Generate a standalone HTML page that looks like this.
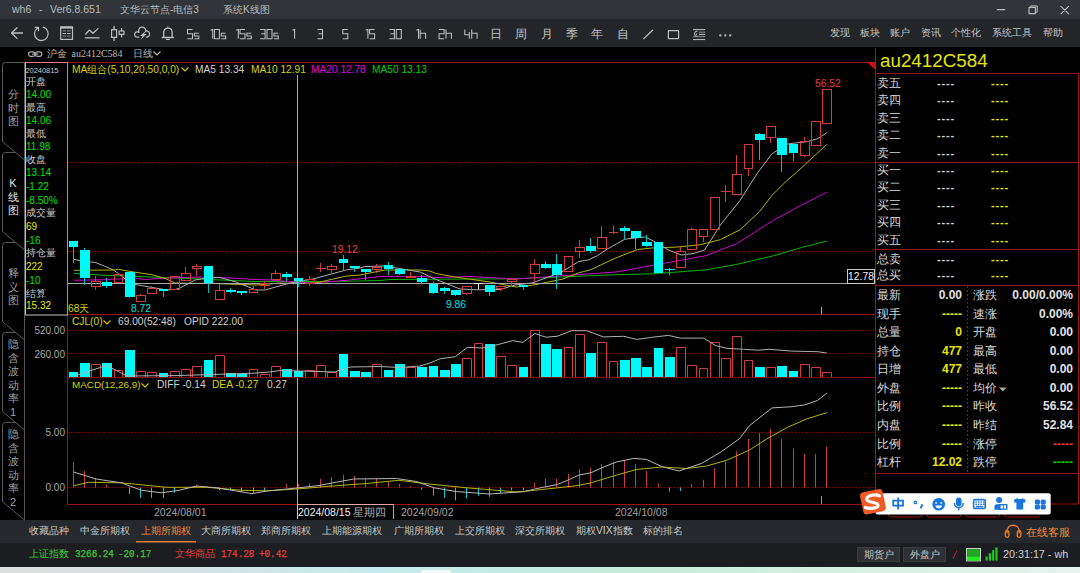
<!DOCTYPE html>
<html><head><meta charset="utf-8">
<style>
html,body{margin:0;padding:0}
body{width:1080px;height:573px;overflow:hidden;position:relative;background:#000;font-family:"Liberation Sans",sans-serif;}
.a{position:absolute;white-space:nowrap;line-height:1}
#title{position:absolute;left:0;top:0;width:1080px;height:19px;background:#313439}
#tool{position:absolute;left:0;top:19px;width:1080px;height:28px;background:#232529}
#tabbar{position:absolute;left:0;top:520px;width:1080px;height:23px;background:#25282c}
#status{position:absolute;left:0;top:543px;width:1080px;height:24px;background:#1c1d20}
#strip{position:absolute;left:0;top:567px;width:1080px;height:6px;background:linear-gradient(90deg,#dcdfdd 0%,#d4e4e6 20%,#c4ecec 35%,#c6ecda 60%,#d6f0e2 80%,#e6f2ee 100%)}
svg{position:absolute;left:0;top:0}
.tt{color:#b8bcc0;font-size:10.5px}
.tb{color:#c4c4c4;font-size:10.2px}
.dig{color:#c8c8c8;font-size:13px;font-family:"Liberation Sans",sans-serif;letter-spacing:-0.5px}
.lt{color:#a0a0a0;font-size:11px;text-align:center;width:22px;line-height:13.5px;white-space:normal}
.dw{font-size:10px;color:#c8c8c8}
.g{color:#00e000}.y{color:#e6e600}.w{color:#d8d8d8}
.rp{font-size:12px;color:#d8d8d8}
.rv{font-size:12px;font-weight:bold;text-align:right}
.bt{font-size:10.3px;color:#c8c8c8}
</style></head><body>
<div id="title"></div>
<div id="tool"></div>
<div id="tabbar"></div>
<div id="status"></div>
<div id="strip"></div>

<svg width="1080" height="573" viewBox="0 0 1080 573">
<line x1="67" y1="162.5" x2="875" y2="162.5" stroke="#800000" stroke-width="1" stroke-dasharray="2,1.37" />
<line x1="67" y1="251.5" x2="875" y2="251.5" stroke="#800000" stroke-width="1" stroke-dasharray="2,1.37" />
<line x1="67" y1="330.5" x2="875" y2="330.5" stroke="#800000" stroke-width="1" stroke-dasharray="2,1.37" />
<line x1="67" y1="353.5" x2="875" y2="353.5" stroke="#800000" stroke-width="1" stroke-dasharray="2,1.37" />
<line x1="67" y1="432.5" x2="875" y2="432.5" stroke="#800000" stroke-width="1" stroke-dasharray="2,1.37" />
<line x1="67" y1="487.5" x2="875" y2="487.5" stroke="#800000" stroke-width="1" stroke-dasharray="2,1.37" />
<line x1="67" y1="62.5" x2="875" y2="62.5" stroke="#a01010" stroke-width="1" />
<line x1="67.5" y1="62" x2="67.5" y2="504" stroke="#a01010" stroke-width="1" />
<line x1="875.5" y1="48" x2="875.5" y2="504" stroke="#a01010" stroke-width="1" />
<line x1="67" y1="314.5" x2="875" y2="314.5" stroke="#a01010" stroke-width="1" />
<line x1="67" y1="504.5" x2="875" y2="504.5" stroke="#a01010" stroke-width="1" />
<polygon points="867,62 875.5,62 875.5,70" fill="#d01010"/>
<polyline points="73.6,273.3 102.6,275.2 166.0,277.6 256.0,281.5 336.0,281.5 380.0,280.5 390.0,279.5 516.0,278.8 616.0,274.7 653.0,273.8 706.0,269.9 736.7,264.4 773.3,255.8 802.7,247.2 826.7,241.1" fill="none" stroke="#00b400" stroke-width="1" stroke-linejoin="round"/>
<polyline points="73.6,280.3 101.4,279.8 134.4,278.2 145.4,279.5 166.0,278.2 200.0,277.0 230.0,278.0 256.0,279.5 270.0,280.0 295.0,282.0 310.0,283.0 345.0,280.5 380.0,276.5 420.0,276.3 436.0,277.5 470.0,276.5 516.0,279.0 616.0,272.0 706.0,255.7 736.7,243.6 773.3,220.3 802.7,204.4 826.7,192.2" fill="none" stroke="#d000d0" stroke-width="1" stroke-linejoin="round"/>
<polyline points="73.6,270.3 113.6,270.0 118.5,269.3 127.0,270.9 134.4,272.1 151.5,274.6 166.0,278.8 175.0,283.0 190.0,283.3 215.0,283.5 240.0,284.5 256.0,285.0 280.0,283.0 300.0,283.5 315.6,283.0 346.0,276.1 360.0,275.0 385.0,270.0 420.0,270.0 430.0,271.0 436.0,273.5 455.0,277.0 490.0,282.0 500.0,284.0 516.0,287.0 531.7,285.4 547.4,282.2 563.0,279.0 578.8,272.8 591.0,269.7 604.0,263.4 616.0,257.9 637.4,249.5 653.1,247.9 676.6,247.1 700.0,244.8 720.4,239.6 740.0,229.8 759.6,211.5 771.8,195.6 786.5,180.9 796.9,172.0 826.8,144.4" fill="none" stroke="#b4b400" stroke-width="1" stroke-linejoin="round"/>
<polyline points="73.6,259.3 84.3,261.4 95.3,262.4 102.6,265.4 113.6,270.0 122.2,276.4 129.5,282.5 134.4,284.3 151.5,287.4 166.0,289.8 175.0,289.5 180.0,288.0 195.0,280.0 210.0,277.5 220.0,277.5 236.0,282.0 256.0,290.0 265.0,290.0 290.0,283.0 300.0,281.5 315.0,278.5 346.0,270.0 360.0,268.0 365.0,266.5 385.0,266.0 400.0,268.6 420.0,272.0 436.0,279.5 445.0,283.0 460.0,289.0 478.0,289.8 500.0,289.5 515.0,285.0 531.7,283.0 547.4,277.5 563.0,271.2 578.8,261.5 588.2,260.0 597.6,255.5 607.0,249.2 624.8,239.2 645.2,236.9 653.1,240.8 668.8,250.2 681.4,255.0 694.0,253.4 704.6,250.0 720.4,225.0 740.0,200.5 757.0,173.6 771.8,154.0 786.5,144.2 796.9,142.8 807.4,141.7 817.8,138.6 826.8,132.7" fill="none" stroke="#b0b0b0" stroke-width="1" stroke-linejoin="round"/>
<line x1="67" y1="283.5" x2="847" y2="283.5" stroke="#a8a8a8" stroke-width="1" />
<line x1="297.5" y1="75" x2="297.5" y2="504" stroke="#b0b0b0" stroke-width="1" />
<line x1="821.5" y1="307" x2="821.5" y2="314" stroke="#a0a0a0" stroke-width="1" />
<line x1="821.5" y1="496" x2="821.5" y2="504" stroke="#a0a0a0" stroke-width="1" />
<line x1="73.5" y1="247" x2="73.5" y2="263" stroke="#00c0c0" stroke-width="1" />
<rect x="69" y="241" width="9" height="6" fill="#00f8f8"/>
<line x1="84.5" y1="248" x2="84.5" y2="250" stroke="#00c0c0" stroke-width="1" />
<line x1="84.5" y1="278" x2="84.5" y2="285" stroke="#00c0c0" stroke-width="1" />
<rect x="80" y="250" width="10" height="28" fill="#00f8f8"/>
<line x1="95.5" y1="276" x2="95.5" y2="281" stroke="#d23c3c" stroke-width="1" />
<line x1="95.5" y1="287" x2="95.5" y2="290" stroke="#d23c3c" stroke-width="1" />
<rect x="91.5" y="281.5" width="9" height="5" fill="none" stroke="#d23c3c" stroke-width="1"/>
<line x1="106.5" y1="278" x2="106.5" y2="282" stroke="#00c0c0" stroke-width="1" />
<line x1="106.5" y1="286" x2="106.5" y2="288" stroke="#00c0c0" stroke-width="1" />
<rect x="102" y="282" width="10" height="4" fill="#00f8f8"/>
<line x1="118.5" y1="273" x2="118.5" y2="274" stroke="#d23c3c" stroke-width="1" />
<rect x="114.5" y="274.5" width="8" height="8" fill="none" stroke="#d23c3c" stroke-width="1"/>
<line x1="129.5" y1="297" x2="129.5" y2="298" stroke="#00c0c0" stroke-width="1" />
<rect x="125" y="272" width="10" height="25" fill="#00f8f8"/>
<line x1="140.5" y1="294" x2="140.5" y2="295" stroke="#d23c3c" stroke-width="1" />
<rect x="136.5" y="295.5" width="9" height="6" fill="none" stroke="#d23c3c" stroke-width="1"/>
<line x1="151.5" y1="286" x2="151.5" y2="288" stroke="#d23c3c" stroke-width="1" />
<rect x="147.5" y="288.5" width="9" height="5" fill="none" stroke="#d23c3c" stroke-width="1"/>
<line x1="163.5" y1="291" x2="163.5" y2="297" stroke="#00c0c0" stroke-width="1" />
<rect x="159" y="289" width="9" height="2" fill="#00f8f8"/>
<rect x="170.5" y="276.5" width="9" height="13" fill="none" stroke="#d23c3c" stroke-width="1"/>
<line x1="185.5" y1="267" x2="185.5" y2="273" stroke="#d23c3c" stroke-width="1" />
<rect x="181.5" y="273.5" width="9" height="7" fill="none" stroke="#d23c3c" stroke-width="1"/>
<line x1="196.5" y1="264" x2="196.5" y2="266" stroke="#d23c3c" stroke-width="1" />
<line x1="196.5" y1="269" x2="196.5" y2="276" stroke="#d23c3c" stroke-width="1" />
<rect x="192.5" y="266.5" width="9" height="2" fill="none" stroke="#d23c3c" stroke-width="1"/>
<line x1="208.5" y1="283" x2="208.5" y2="293" stroke="#00c0c0" stroke-width="1" />
<rect x="204" y="266" width="9" height="17" fill="#00f8f8"/>
<line x1="219.5" y1="284" x2="219.5" y2="290" stroke="#d23c3c" stroke-width="1" />
<rect x="215.5" y="290.5" width="9" height="9" fill="none" stroke="#d23c3c" stroke-width="1"/>
<line x1="230.5" y1="288" x2="230.5" y2="290" stroke="#00c0c0" stroke-width="1" />
<line x1="230.5" y1="292" x2="230.5" y2="293" stroke="#00c0c0" stroke-width="1" />
<rect x="226" y="290" width="10" height="2" fill="#00f8f8"/>
<line x1="241.5" y1="293" x2="241.5" y2="295" stroke="#00c0c0" stroke-width="1" />
<rect x="237" y="291" width="10" height="2" fill="#00f8f8"/>
<line x1="253.5" y1="286" x2="253.5" y2="289" stroke="#d23c3c" stroke-width="1" />
<rect x="249.5" y="289.5" width="8" height="3" fill="none" stroke="#d23c3c" stroke-width="1"/>
<line x1="264.5" y1="281" x2="264.5" y2="283" stroke="#d23c3c" stroke-width="1" />
<line x1="264.5" y1="286" x2="264.5" y2="289" stroke="#d23c3c" stroke-width="1" />
<rect x="260.5" y="283.5" width="9" height="2" fill="none" stroke="#d23c3c" stroke-width="1"/>
<line x1="275.5" y1="270" x2="275.5" y2="273" stroke="#d23c3c" stroke-width="1" />
<rect x="271.5" y="273.5" width="9" height="6" fill="none" stroke="#d23c3c" stroke-width="1"/>
<line x1="286.5" y1="272" x2="286.5" y2="274" stroke="#00c0c0" stroke-width="1" />
<line x1="286.5" y1="277" x2="286.5" y2="281" stroke="#00c0c0" stroke-width="1" />
<rect x="282" y="274" width="10" height="3" fill="#00f8f8"/>
<line x1="298.5" y1="281" x2="298.5" y2="287" stroke="#00c0c0" stroke-width="1" />
<rect x="294" y="278" width="9" height="3" fill="#00f8f8"/>
<line x1="309.5" y1="276" x2="309.5" y2="279" stroke="#d23c3c" stroke-width="1" />
<line x1="309.5" y1="284" x2="309.5" y2="286" stroke="#d23c3c" stroke-width="1" />
<rect x="305.5" y="279.5" width="9" height="4" fill="none" stroke="#d23c3c" stroke-width="1"/>
<line x1="320.5" y1="263" x2="320.5" y2="272" stroke="#d23c3c" stroke-width="1" />
<line x1="316" y1="268.5" x2="326" y2="268.5" stroke="#d23c3c" stroke-width="1" />
<line x1="331.5" y1="264" x2="331.5" y2="266" stroke="#d23c3c" stroke-width="1" />
<line x1="331.5" y1="270" x2="331.5" y2="273" stroke="#d23c3c" stroke-width="1" />
<rect x="327.5" y="266.5" width="9" height="3" fill="none" stroke="#d23c3c" stroke-width="1"/>
<line x1="343.5" y1="255" x2="343.5" y2="259" stroke="#00c0c0" stroke-width="1" />
<line x1="343.5" y1="263" x2="343.5" y2="271" stroke="#00c0c0" stroke-width="1" />
<rect x="339" y="259" width="9" height="4" fill="#00f8f8"/>
<line x1="354.5" y1="268" x2="354.5" y2="272" stroke="#00c0c0" stroke-width="1" />
<rect x="350" y="266" width="10" height="2" fill="#00f8f8"/>
<line x1="365.5" y1="272" x2="365.5" y2="280" stroke="#00c0c0" stroke-width="1" />
<rect x="361" y="269" width="10" height="3" fill="#00f8f8"/>
<line x1="376.5" y1="264" x2="376.5" y2="267" stroke="#d23c3c" stroke-width="1" />
<line x1="376.5" y1="270" x2="376.5" y2="273" stroke="#d23c3c" stroke-width="1" />
<rect x="372.5" y="267.5" width="9" height="2" fill="none" stroke="#d23c3c" stroke-width="1"/>
<line x1="388.5" y1="262" x2="388.5" y2="265" stroke="#00c0c0" stroke-width="1" />
<line x1="388.5" y1="269" x2="388.5" y2="275" stroke="#00c0c0" stroke-width="1" />
<rect x="384" y="265" width="9" height="4" fill="#00f8f8"/>
<line x1="399.5" y1="268" x2="399.5" y2="269" stroke="#00c0c0" stroke-width="1" />
<line x1="399.5" y1="274" x2="399.5" y2="275" stroke="#00c0c0" stroke-width="1" />
<rect x="395" y="269" width="10" height="5" fill="#00f8f8"/>
<line x1="410.5" y1="272" x2="410.5" y2="276" stroke="#d23c3c" stroke-width="1" />
<line x1="410.5" y1="277" x2="410.5" y2="278" stroke="#d23c3c" stroke-width="1" />
<rect x="406.5" y="276.5" width="9" height="1" fill="none" stroke="#d23c3c" stroke-width="1"/>
<line x1="421.5" y1="275" x2="421.5" y2="278" stroke="#00c0c0" stroke-width="1" />
<line x1="421.5" y1="282" x2="421.5" y2="283" stroke="#00c0c0" stroke-width="1" />
<rect x="417" y="278" width="10" height="4" fill="#00f8f8"/>
<line x1="433.5" y1="282" x2="433.5" y2="284" stroke="#00c0c0" stroke-width="1" />
<line x1="433.5" y1="293" x2="433.5" y2="294" stroke="#00c0c0" stroke-width="1" />
<rect x="429" y="284" width="9" height="9" fill="#00f8f8"/>
<line x1="444.5" y1="287" x2="444.5" y2="288" stroke="#00c0c0" stroke-width="1" />
<line x1="444.5" y1="291" x2="444.5" y2="294" stroke="#00c0c0" stroke-width="1" />
<rect x="440" y="288" width="10" height="3" fill="#00f8f8"/>
<line x1="455.5" y1="295" x2="455.5" y2="296" stroke="#00c0c0" stroke-width="1" />
<rect x="451" y="290" width="10" height="5" fill="#00f8f8"/>
<line x1="466.5" y1="294" x2="466.5" y2="295" stroke="#d23c3c" stroke-width="1" />
<rect x="462.5" y="286.5" width="9" height="7" fill="none" stroke="#d23c3c" stroke-width="1"/>
<line x1="478.5" y1="283" x2="478.5" y2="289" stroke="#f0f0f0" stroke-width="1" />
<line x1="474" y1="283.5" x2="483" y2="283.5" stroke="#f0f0f0" stroke-width="1" />
<line x1="489.5" y1="292" x2="489.5" y2="296" stroke="#00c0c0" stroke-width="1" />
<rect x="485" y="285" width="10" height="7" fill="#00f8f8"/>
<line x1="500.5" y1="289" x2="500.5" y2="291" stroke="#d23c3c" stroke-width="1" />
<rect x="496.5" y="286.5" width="9" height="2" fill="none" stroke="#d23c3c" stroke-width="1"/>
<line x1="511.5" y1="282" x2="511.5" y2="287" stroke="#d23c3c" stroke-width="1" />
<rect x="507.5" y="279.5" width="9" height="2" fill="none" stroke="#d23c3c" stroke-width="1"/>
<line x1="523.5" y1="287" x2="523.5" y2="290" stroke="#00c0c0" stroke-width="1" />
<rect x="519" y="285" width="9" height="2" fill="#00f8f8"/>
<line x1="534.5" y1="259" x2="534.5" y2="264" stroke="#d23c3c" stroke-width="1" />
<line x1="534.5" y1="274" x2="534.5" y2="283" stroke="#d23c3c" stroke-width="1" />
<rect x="530.5" y="264.5" width="9" height="9" fill="none" stroke="#d23c3c" stroke-width="1"/>
<line x1="545.5" y1="261" x2="545.5" y2="264" stroke="#00c0c0" stroke-width="1" />
<line x1="545.5" y1="268" x2="545.5" y2="269" stroke="#00c0c0" stroke-width="1" />
<rect x="541" y="264" width="10" height="4" fill="#00f8f8"/>
<line x1="556.5" y1="254" x2="556.5" y2="264" stroke="#00c0c0" stroke-width="1" />
<line x1="556.5" y1="275" x2="556.5" y2="289" stroke="#00c0c0" stroke-width="1" />
<rect x="552" y="264" width="10" height="11" fill="#00f8f8"/>
<rect x="564.5" y="256.5" width="8" height="15" fill="none" stroke="#d23c3c" stroke-width="1"/>
<line x1="579.5" y1="240" x2="579.5" y2="247" stroke="#d23c3c" stroke-width="1" />
<line x1="579.5" y1="252" x2="579.5" y2="258" stroke="#d23c3c" stroke-width="1" />
<rect x="575.5" y="247.5" width="9" height="4" fill="none" stroke="#d23c3c" stroke-width="1"/>
<line x1="590.5" y1="238" x2="590.5" y2="246" stroke="#00c0c0" stroke-width="1" />
<line x1="590.5" y1="251" x2="590.5" y2="253" stroke="#00c0c0" stroke-width="1" />
<rect x="586" y="246" width="10" height="5" fill="#00f8f8"/>
<line x1="601.5" y1="226" x2="601.5" y2="237" stroke="#d23c3c" stroke-width="1" />
<rect x="597.5" y="237.5" width="9" height="11" fill="none" stroke="#d23c3c" stroke-width="1"/>
<line x1="613.5" y1="225" x2="613.5" y2="234" stroke="#d23c3c" stroke-width="1" />
<line x1="609" y1="232.5" x2="618" y2="232.5" stroke="#d23c3c" stroke-width="1" />
<line x1="624.5" y1="226" x2="624.5" y2="228" stroke="#00c0c0" stroke-width="1" />
<line x1="624.5" y1="231" x2="624.5" y2="239" stroke="#00c0c0" stroke-width="1" />
<rect x="620" y="228" width="10" height="3" fill="#00f8f8"/>
<line x1="635.5" y1="238" x2="635.5" y2="249" stroke="#00c0c0" stroke-width="1" />
<rect x="631" y="231" width="10" height="7" fill="#00f8f8"/>
<line x1="646.5" y1="235" x2="646.5" y2="242" stroke="#00c0c0" stroke-width="1" />
<line x1="646.5" y1="246" x2="646.5" y2="247" stroke="#00c0c0" stroke-width="1" />
<rect x="642" y="242" width="10" height="4" fill="#00f8f8"/>
<rect x="654" y="242" width="9" height="31" fill="#00f8f8"/>
<line x1="669.5" y1="268" x2="669.5" y2="269" stroke="#00c0c0" stroke-width="1" />
<line x1="669.5" y1="270" x2="669.5" y2="275" stroke="#00c0c0" stroke-width="1" />
<rect x="665" y="269" width="10" height="1" fill="#00f8f8"/>
<line x1="680.5" y1="246" x2="680.5" y2="251" stroke="#d23c3c" stroke-width="1" />
<rect x="676.5" y="251.5" width="9" height="16" fill="none" stroke="#d23c3c" stroke-width="1"/>
<line x1="691.5" y1="228" x2="691.5" y2="229" stroke="#d23c3c" stroke-width="1" />
<rect x="687.5" y="229.5" width="9" height="20" fill="none" stroke="#d23c3c" stroke-width="1"/>
<line x1="703.5" y1="237" x2="703.5" y2="242" stroke="#d23c3c" stroke-width="1" />
<rect x="699.5" y="229.5" width="8" height="7" fill="none" stroke="#d23c3c" stroke-width="1"/>
<rect x="710.5" y="197.5" width="9" height="32" fill="none" stroke="#d23c3c" stroke-width="1"/>
<line x1="725.5" y1="185" x2="725.5" y2="202" stroke="#d23c3c" stroke-width="1" />
<line x1="721" y1="191.5" x2="731" y2="191.5" stroke="#d23c3c" stroke-width="1" />
<line x1="736.5" y1="155" x2="736.5" y2="174" stroke="#d23c3c" stroke-width="1" />
<rect x="732.5" y="174.5" width="9" height="20" fill="none" stroke="#d23c3c" stroke-width="1"/>
<line x1="748.5" y1="169" x2="748.5" y2="176" stroke="#d23c3c" stroke-width="1" />
<rect x="744.5" y="144.5" width="8" height="24" fill="none" stroke="#d23c3c" stroke-width="1"/>
<line x1="759.5" y1="133" x2="759.5" y2="134" stroke="#00c0c0" stroke-width="1" />
<line x1="759.5" y1="140" x2="759.5" y2="160" stroke="#00c0c0" stroke-width="1" />
<rect x="755" y="134" width="10" height="6" fill="#00f8f8"/>
<line x1="770.5" y1="138" x2="770.5" y2="143" stroke="#d23c3c" stroke-width="1" />
<rect x="766.5" y="126.5" width="9" height="11" fill="none" stroke="#d23c3c" stroke-width="1"/>
<line x1="781.5" y1="155" x2="781.5" y2="172" stroke="#00c0c0" stroke-width="1" />
<rect x="777" y="138" width="10" height="17" fill="#00f8f8"/>
<line x1="793.5" y1="153" x2="793.5" y2="161" stroke="#00c0c0" stroke-width="1" />
<rect x="789" y="144" width="9" height="9" fill="#00f8f8"/>
<line x1="804.5" y1="137" x2="804.5" y2="141" stroke="#d23c3c" stroke-width="1" />
<line x1="804.5" y1="156" x2="804.5" y2="157" stroke="#d23c3c" stroke-width="1" />
<rect x="800.5" y="141.5" width="9" height="14" fill="none" stroke="#d23c3c" stroke-width="1"/>
<rect x="811.5" y="121.5" width="9" height="24" fill="none" stroke="#d23c3c" stroke-width="1"/>
<rect x="822.5" y="89.5" width="9" height="34" fill="none" stroke="#d23c3c" stroke-width="1"/>
<rect x="69" y="372" width="9" height="5" fill="#00f8f8"/>
<rect x="80" y="363" width="10" height="14" fill="#00f8f8"/>
<path d="M91.5,377 L91.5,364.5 L100.5,364.5 L100.5,377" fill="none" stroke="#d23c3c" stroke-width="1"/>
<rect x="102" y="363" width="10" height="14" fill="#00f8f8"/>
<path d="M114.5,377 L114.5,370.5 L122.5,370.5 L122.5,377" fill="none" stroke="#d23c3c" stroke-width="1"/>
<rect x="125" y="350" width="10" height="27" fill="#00f8f8"/>
<path d="M136.5,377 L136.5,371.5 L145.5,371.5 L145.5,377" fill="none" stroke="#d23c3c" stroke-width="1"/>
<path d="M147.5,377 L147.5,372.5 L156.5,372.5 L156.5,377" fill="none" stroke="#d23c3c" stroke-width="1"/>
<rect x="159" y="373" width="9" height="4" fill="#00f8f8"/>
<path d="M170.5,377 L170.5,371.5 L179.5,371.5 L179.5,377" fill="none" stroke="#d23c3c" stroke-width="1"/>
<path d="M181.5,377 L181.5,369.5 L190.5,369.5 L190.5,377" fill="none" stroke="#d23c3c" stroke-width="1"/>
<path d="M192.5,377 L192.5,366.5 L201.5,366.5 L201.5,377" fill="none" stroke="#d23c3c" stroke-width="1"/>
<rect x="204" y="360" width="9" height="17" fill="#00f8f8"/>
<path d="M215.5,377 L215.5,355.5 L224.5,355.5 L224.5,377" fill="none" stroke="#d23c3c" stroke-width="1"/>
<rect x="226" y="373" width="10" height="4" fill="#00f8f8"/>
<rect x="237" y="374" width="10" height="3" fill="#00f8f8"/>
<path d="M249.5,377 L249.5,369.5 L257.5,369.5 L257.5,377" fill="none" stroke="#d23c3c" stroke-width="1"/>
<path d="M260.5,377 L260.5,374.5 L269.5,374.5 L269.5,377" fill="none" stroke="#d23c3c" stroke-width="1"/>
<path d="M271.5,377 L271.5,366.5 L280.5,366.5 L280.5,377" fill="none" stroke="#d23c3c" stroke-width="1"/>
<rect x="282" y="369" width="10" height="8" fill="#00f8f8"/>
<rect x="294" y="371" width="9" height="6" fill="#00f8f8"/>
<path d="M305.5,377 L305.5,370.5 L314.5,370.5 L314.5,377" fill="none" stroke="#d23c3c" stroke-width="1"/>
<path d="M316.5,377 L316.5,365.5 L325.5,365.5 L325.5,377" fill="none" stroke="#d23c3c" stroke-width="1"/>
<path d="M327.5,377 L327.5,372.5 L336.5,372.5 L336.5,377" fill="none" stroke="#d23c3c" stroke-width="1"/>
<rect x="339" y="354" width="9" height="23" fill="#00f8f8"/>
<rect x="350" y="371" width="10" height="6" fill="#00f8f8"/>
<rect x="361" y="372" width="10" height="5" fill="#00f8f8"/>
<path d="M372.5,377 L372.5,364.5 L381.5,364.5 L381.5,377" fill="none" stroke="#d23c3c" stroke-width="1"/>
<rect x="384" y="370" width="9" height="7" fill="#00f8f8"/>
<rect x="395" y="364" width="10" height="13" fill="#00f8f8"/>
<path d="M406.5,377 L406.5,367.5 L415.5,367.5 L415.5,377" fill="none" stroke="#d23c3c" stroke-width="1"/>
<rect x="417" y="367" width="10" height="10" fill="#00f8f8"/>
<rect x="429" y="366" width="9" height="11" fill="#00f8f8"/>
<rect x="440" y="370" width="10" height="7" fill="#00f8f8"/>
<rect x="451" y="364" width="10" height="13" fill="#00f8f8"/>
<path d="M462.5,377 L462.5,358.5 L471.5,358.5 L471.5,377" fill="none" stroke="#d23c3c" stroke-width="1"/>
<path d="M474.5,377 L474.5,343.5 L482.5,343.5 L482.5,377" fill="none" stroke="#d23c3c" stroke-width="1"/>
<rect x="485" y="344" width="10" height="33" fill="#00f8f8"/>
<path d="M496.5,377 L496.5,356.5 L505.5,356.5 L505.5,377" fill="none" stroke="#d23c3c" stroke-width="1"/>
<path d="M507.5,377 L507.5,365.5 L516.5,365.5 L516.5,377" fill="none" stroke="#d23c3c" stroke-width="1"/>
<rect x="519" y="367" width="9" height="10" fill="#00f8f8"/>
<path d="M530.5,377 L530.5,330.5 L539.5,330.5 L539.5,377" fill="none" stroke="#d23c3c" stroke-width="1"/>
<rect x="541" y="344" width="10" height="33" fill="#00f8f8"/>
<rect x="552" y="349" width="10" height="28" fill="#00f8f8"/>
<path d="M564.5,377 L564.5,347.5 L572.5,347.5 L572.5,377" fill="none" stroke="#d23c3c" stroke-width="1"/>
<path d="M575.5,377 L575.5,334.5 L584.5,334.5 L584.5,377" fill="none" stroke="#d23c3c" stroke-width="1"/>
<rect x="586" y="353" width="10" height="24" fill="#00f8f8"/>
<path d="M597.5,377 L597.5,342.5 L606.5,342.5 L606.5,377" fill="none" stroke="#d23c3c" stroke-width="1"/>
<path d="M609.5,377 L609.5,361.5 L617.5,361.5 L617.5,377" fill="none" stroke="#d23c3c" stroke-width="1"/>
<rect x="620" y="360" width="10" height="17" fill="#00f8f8"/>
<rect x="631" y="358" width="10" height="19" fill="#00f8f8"/>
<rect x="642" y="367" width="10" height="10" fill="#00f8f8"/>
<rect x="654" y="348" width="9" height="29" fill="#00f8f8"/>
<rect x="665" y="357" width="10" height="20" fill="#00f8f8"/>
<path d="M676.5,377 L676.5,347.5 L685.5,347.5 L685.5,377" fill="none" stroke="#d23c3c" stroke-width="1"/>
<path d="M687.5,377 L687.5,365.5 L696.5,365.5 L696.5,377" fill="none" stroke="#d23c3c" stroke-width="1"/>
<path d="M699.5,377 L699.5,368.5 L707.5,368.5 L707.5,377" fill="none" stroke="#d23c3c" stroke-width="1"/>
<path d="M710.5,377 L710.5,342.5 L719.5,342.5 L719.5,377" fill="none" stroke="#d23c3c" stroke-width="1"/>
<path d="M721.5,377 L721.5,358.5 L730.5,358.5 L730.5,377" fill="none" stroke="#d23c3c" stroke-width="1"/>
<path d="M732.5,377 L732.5,336.5 L741.5,336.5 L741.5,377" fill="none" stroke="#d23c3c" stroke-width="1"/>
<path d="M744.5,377 L744.5,360.5 L752.5,360.5 L752.5,377" fill="none" stroke="#d23c3c" stroke-width="1"/>
<rect x="755" y="367" width="10" height="10" fill="#00f8f8"/>
<path d="M766.5,377 L766.5,367.5 L775.5,367.5 L775.5,377" fill="none" stroke="#d23c3c" stroke-width="1"/>
<rect x="777" y="366" width="10" height="11" fill="#00f8f8"/>
<rect x="789" y="371" width="9" height="6" fill="#00f8f8"/>
<path d="M800.5,377 L800.5,364.5 L809.5,364.5 L809.5,377" fill="none" stroke="#d23c3c" stroke-width="1"/>
<path d="M811.5,377 L811.5,367.5 L820.5,367.5 L820.5,377" fill="none" stroke="#d23c3c" stroke-width="1"/>
<path d="M822.5,377 L822.5,372.5 L831.5,372.5 L831.5,377" fill="none" stroke="#d23c3c" stroke-width="1"/>
<line x1="67" y1="377.5" x2="875" y2="377.5" stroke="#8a0a0a" stroke-width="1" />
<polyline points="75.3,375.7 106.7,365.4 127.0,376.0 180.0,375.5 251.0,373.3 256.0,373.0 270.0,372.0 280.0,370.5 300.0,371.0 335.0,372.0 340.0,370.0 350.0,367.0 380.0,366.5 400.0,367.5 420.0,366.0 430.0,363.0 440.0,358.8 455.3,356.7 467.3,347.4 483.0,348.0 494.1,345.6 512.7,340.6 522.9,342.4 534.9,333.5 546.0,337.2 557.1,336.3 571.9,330.7 586.7,330.7 603.4,336.9 623.8,336.3 636.7,339.4 652.7,337.2 668.4,335.4 680.4,338.1 703.6,338.1 715.6,345.6 726.7,348.3 743.4,349.3 758.2,350.2 769.3,349.3 791.6,351.1 817.5,351.7 826.7,353.0" fill="none" stroke="#b0b0b0" stroke-width="1" stroke-linejoin="round"/>
<line x1="73.5" y1="487.5" x2="73.5" y2="462" stroke="#cc3c3c" stroke-width="1" />
<line x1="84.5" y1="487.5" x2="84.5" y2="471" stroke="#cc3c3c" stroke-width="1" />
<line x1="95.5" y1="487.5" x2="95.5" y2="478" stroke="#cc3c3c" stroke-width="1" />
<line x1="106.5" y1="487.5" x2="106.5" y2="484.5" stroke="#cc3c3c" stroke-width="1" />
<line x1="129.5" y1="487.5" x2="129.5" y2="494" stroke="#10c8d8" stroke-width="1" />
<line x1="140.5" y1="487.5" x2="140.5" y2="497.9" stroke="#10c8d8" stroke-width="1" />
<line x1="151.5" y1="487.5" x2="151.5" y2="497.9" stroke="#10c8d8" stroke-width="1" />
<line x1="163.5" y1="487.5" x2="163.5" y2="497.9" stroke="#10c8d8" stroke-width="1" />
<line x1="174.5" y1="487.5" x2="174.5" y2="492.8" stroke="#10c8d8" stroke-width="1" />
<line x1="185.5" y1="487.5" x2="185.5" y2="489" stroke="#10c8d8" stroke-width="1" />
<line x1="196.5" y1="487.5" x2="196.5" y2="484.5" stroke="#cc3c3c" stroke-width="1" />
<line x1="219.5" y1="487.5" x2="219.5" y2="490" stroke="#10c8d8" stroke-width="1" />
<line x1="230.5" y1="487.5" x2="230.5" y2="490" stroke="#10c8d8" stroke-width="1" />
<line x1="241.5" y1="487.5" x2="241.5" y2="492" stroke="#10c8d8" stroke-width="1" />
<line x1="253.5" y1="487.5" x2="253.5" y2="493" stroke="#10c8d8" stroke-width="1" />
<line x1="264.5" y1="487.5" x2="264.5" y2="491" stroke="#10c8d8" stroke-width="1" />
<line x1="286.5" y1="487.5" x2="286.5" y2="484" stroke="#cc3c3c" stroke-width="1" />
<line x1="298.5" y1="487.5" x2="298.5" y2="484" stroke="#cc3c3c" stroke-width="1" />
<line x1="309.5" y1="487.5" x2="309.5" y2="483.5" stroke="#cc3c3c" stroke-width="1" />
<line x1="320.5" y1="487.5" x2="320.5" y2="479" stroke="#cc3c3c" stroke-width="1" />
<line x1="331.5" y1="487.5" x2="331.5" y2="477" stroke="#cc3c3c" stroke-width="1" />
<line x1="343.5" y1="487.5" x2="343.5" y2="474.7" stroke="#cc3c3c" stroke-width="1" />
<line x1="354.5" y1="487.5" x2="354.5" y2="476" stroke="#cc3c3c" stroke-width="1" />
<line x1="365.5" y1="487.5" x2="365.5" y2="478.5" stroke="#cc3c3c" stroke-width="1" />
<line x1="376.5" y1="487.5" x2="376.5" y2="479" stroke="#cc3c3c" stroke-width="1" />
<line x1="388.5" y1="487.5" x2="388.5" y2="481" stroke="#cc3c3c" stroke-width="1" />
<line x1="399.5" y1="487.5" x2="399.5" y2="484" stroke="#cc3c3c" stroke-width="1" />
<line x1="410.5" y1="487.5" x2="410.5" y2="486" stroke="#cc3c3c" stroke-width="1" />
<line x1="421.5" y1="487.5" x2="421.5" y2="489.6" stroke="#10c8d8" stroke-width="1" />
<line x1="433.5" y1="487.5" x2="433.5" y2="495.3" stroke="#10c8d8" stroke-width="1" />
<line x1="444.5" y1="487.5" x2="444.5" y2="497.9" stroke="#10c8d8" stroke-width="1" />
<line x1="455.5" y1="487.5" x2="455.5" y2="500.4" stroke="#10c8d8" stroke-width="1" />
<line x1="466.5" y1="487.5" x2="466.5" y2="498.4" stroke="#10c8d8" stroke-width="1" />
<line x1="478.5" y1="487.5" x2="478.5" y2="495.8" stroke="#10c8d8" stroke-width="1" />
<line x1="489.5" y1="487.5" x2="489.5" y2="496.6" stroke="#10c8d8" stroke-width="1" />
<line x1="500.5" y1="487.5" x2="500.5" y2="493.3" stroke="#10c8d8" stroke-width="1" />
<line x1="511.5" y1="487.5" x2="511.5" y2="490.3" stroke="#10c8d8" stroke-width="1" />
<line x1="523.5" y1="487.5" x2="523.5" y2="490.3" stroke="#10c8d8" stroke-width="1" />
<line x1="534.5" y1="487.5" x2="534.5" y2="482.8" stroke="#cc3c3c" stroke-width="1" />
<line x1="545.5" y1="487.5" x2="545.5" y2="478.5" stroke="#cc3c3c" stroke-width="1" />
<line x1="556.5" y1="487.5" x2="556.5" y2="479" stroke="#cc3c3c" stroke-width="1" />
<line x1="568.5" y1="487.5" x2="568.5" y2="474" stroke="#cc3c3c" stroke-width="1" />
<line x1="579.5" y1="487.5" x2="579.5" y2="469" stroke="#cc3c3c" stroke-width="1" />
<line x1="590.5" y1="487.5" x2="590.5" y2="467.7" stroke="#cc3c3c" stroke-width="1" />
<line x1="601.5" y1="487.5" x2="601.5" y2="464" stroke="#cc3c3c" stroke-width="1" />
<line x1="613.5" y1="487.5" x2="613.5" y2="461.4" stroke="#cc3c3c" stroke-width="1" />
<line x1="624.5" y1="487.5" x2="624.5" y2="460.2" stroke="#cc3c3c" stroke-width="1" />
<line x1="635.5" y1="487.5" x2="635.5" y2="464" stroke="#cc3c3c" stroke-width="1" />
<line x1="646.5" y1="487.5" x2="646.5" y2="471" stroke="#cc3c3c" stroke-width="1" />
<line x1="658.5" y1="487.5" x2="658.5" y2="483.5" stroke="#cc3c3c" stroke-width="1" />
<line x1="669.5" y1="487.5" x2="669.5" y2="491.6" stroke="#10c8d8" stroke-width="1" />
<line x1="680.5" y1="487.5" x2="680.5" y2="491" stroke="#10c8d8" stroke-width="1" />
<line x1="691.5" y1="487.5" x2="691.5" y2="484" stroke="#cc3c3c" stroke-width="1" />
<line x1="703.5" y1="487.5" x2="703.5" y2="479.8" stroke="#cc3c3c" stroke-width="1" />
<line x1="714.5" y1="487.5" x2="714.5" y2="468.2" stroke="#cc3c3c" stroke-width="1" />
<line x1="725.5" y1="487.5" x2="725.5" y2="461.4" stroke="#cc3c3c" stroke-width="1" />
<line x1="736.5" y1="487.5" x2="736.5" y2="451.4" stroke="#cc3c3c" stroke-width="1" />
<line x1="748.5" y1="487.5" x2="748.5" y2="438.8" stroke="#cc3c3c" stroke-width="1" />
<line x1="759.5" y1="487.5" x2="759.5" y2="433" stroke="#cc3c3c" stroke-width="1" />
<line x1="770.5" y1="487.5" x2="770.5" y2="428.8" stroke="#cc3c3c" stroke-width="1" />
<line x1="781.5" y1="487.5" x2="781.5" y2="438.8" stroke="#cc3c3c" stroke-width="1" />
<line x1="793.5" y1="487.5" x2="793.5" y2="448.4" stroke="#cc3c3c" stroke-width="1" />
<line x1="804.5" y1="487.5" x2="804.5" y2="453.9" stroke="#cc3c3c" stroke-width="1" />
<line x1="815.5" y1="487.5" x2="815.5" y2="453.9" stroke="#cc3c3c" stroke-width="1" />
<line x1="826.5" y1="487.5" x2="826.5" y2="446.4" stroke="#cc3c3c" stroke-width="1" />
<polyline points="73.5,485.8 88.6,482.3 121.3,482.8 166.5,487.3 206.7,487.3 241.9,490.3 267.0,490.8 297.0,489.0 326.0,486.5 366.3,483.5 398.9,480.3 429.0,484.0 466.8,487.8 517.0,492.0 534.6,490.3 576.0,485.8 591.1,482.8 616.3,475.2 636.4,469.5 661.5,467.0 686.6,468.5 706.7,466.0 726.8,460.2 749.4,450.1 767.0,438.8 787.1,427.5 807.2,418.7 827.0,412.7" fill="none" stroke="#b4b400" stroke-width="1" stroke-linejoin="round"/>
<polyline points="73.5,472.0 96.2,479.0 121.3,482.8 141.4,490.3 161.5,492.8 179.0,490.3 196.6,486.0 216.8,487.8 251.9,493.6 267.0,491.0 287.0,489.0 317.0,485.8 353.7,479.0 396.4,478.5 416.5,481.5 434.0,487.8 456.7,491.6 489.4,494.0 524.5,491.6 534.6,489.0 557.2,484.5 566.0,481.0 578.6,475.2 591.1,472.7 603.7,467.0 616.3,462.0 633.8,458.4 646.4,459.4 661.5,466.5 679.0,471.0 701.7,463.4 721.8,451.4 739.4,438.8 749.4,425.7 772.0,407.9 792.1,406.7 804.7,404.9 817.3,400.6 827.0,393.0" fill="none" stroke="#b8b8b8" stroke-width="1" stroke-linejoin="round"/>
<line x1="875.5" y1="73.5" x2="1078.5" y2="73.5" stroke="#a01010" stroke-width="1" />
<line x1="1078.5" y1="73" x2="1078.5" y2="504" stroke="#a01010" stroke-width="1" />
<line x1="875" y1="162.5" x2="1078.5" y2="162.5" stroke="#a01010" stroke-width="1" />
<line x1="875" y1="249.5" x2="1078.5" y2="249.5" stroke="#a01010" stroke-width="1" />
<line x1="875" y1="285.5" x2="1078.5" y2="285.5" stroke="#a01010" stroke-width="1" />
<line x1="875" y1="473.5" x2="1078.5" y2="473.5" stroke="#a01010" stroke-width="1" />
<line x1="967.5" y1="286" x2="967.5" y2="473" stroke="#a01010" stroke-width="1" stroke-dasharray="2,2" />
<line x1="935" y1="504" x2="1078.5" y2="504" stroke="#a01010" stroke-width="1" />
<line x1="24.5" y1="62" x2="24.5" y2="520" stroke="#5a5a5a" stroke-width="1" />
<path d="M2.5,141.5 L2.5,65.5 Q2.5,62.5 5.5,62.5 L24.5,62.5" fill="none" stroke="#5a5a5a"/>
<path d="M2.5,141.5 L24.5,160.0" fill="none" stroke="#5a5a5a"/>
<path d="M2.5,231.5 L2.5,155.5 Q2.5,152.5 5.5,152.5 L15,152.5" fill="none" stroke="#5a5a5a"/>
<path d="M2.5,231.5 L24.5,250.0" fill="none" stroke="#5a5a5a"/>
<path d="M2.5,321.5 L2.5,245.5 Q2.5,242.5 5.5,242.5 L15,242.5" fill="none" stroke="#5a5a5a"/>
<path d="M2.5,321.5 L24.5,340.0" fill="none" stroke="#5a5a5a"/>
<path d="M2.5,411.5 L2.5,335.5 Q2.5,332.5 5.5,332.5 L15,332.5" fill="none" stroke="#5a5a5a"/>
<path d="M2.5,411.5 L24.5,430.0" fill="none" stroke="#5a5a5a"/>
<path d="M2.5,501.5 L2.5,425.5 Q2.5,422.5 5.5,422.5 L15,422.5" fill="none" stroke="#5a5a5a"/>
<path d="M2.5,501.5 L24.5,520.0" fill="none" stroke="#5a5a5a"/>
<rect x="25.5" y="62.5" width="42" height="252.5" fill="none" stroke="#c0c0c0"/>
<line x1="26" y1="62.5" x2="67.5" y2="62.5" stroke="#e08080"/>
<line x1="67.5" y1="62.5" x2="67.5" y2="315" stroke="#e08080"/>
<path d="M297.5,519 L297.5,504.5" stroke="#c8c8c8"/><path d="M393.5,519 L393.5,504.5" stroke="#a8a8a8"/><path d="M297,504.5 L394,504.5" stroke="#e0a8a8"/>
<path d="M999,387.5 L1006.5,387.5 L1002.75,391.5 Z" fill="#a8a8a8"/>
<g fill="none" stroke="#bdbdbd" stroke-width="1.3" stroke-linecap="round" stroke-linejoin="round">
<path d="M22.5,33 L11.5,33 M17,27.8 L11.5,33 L17,38.4"/>
<path d="M37.6,28.1 A6.8,6.8 0 1 0 43.2,27.2" stroke-width="1.2"/><path d="M35.2,27.4 L38.5,27.4 L38.5,30.7" stroke-width="1.2"/>
<rect x="60.7" y="26.8" width="11.8" height="12.6" stroke-width="1.2"/>
</g>
<rect x="60.7" y="26.8" width="11.8" height="1.8" fill="#bdbdbd"/>
<rect x="62.6" y="30.4" width="3.6" height="1" fill="#8a8a8a"/><rect x="67.1" y="30.4" width="3.6" height="1" fill="#8a8a8a"/>
<rect x="62.6" y="33.0" width="3.6" height="1" fill="#b8b8b8"/><rect x="67.1" y="33.0" width="3.6" height="1" fill="#b8b8b8"/>
<rect x="62.6" y="35.6" width="3.6" height="1" fill="#8a8a8a"/><rect x="67.1" y="35.6" width="3.6" height="1" fill="#8a8a8a"/>
<g fill="none" stroke="#bdbdbd" stroke-width="1.3" stroke-linecap="round" stroke-linejoin="round">
<path d="M85.8,34 L89.3,30.1 L93,33.3 L98,28.6"/><path d="M85.3,37.8 L99.2,37.8"/>
<rect x="111.6" y="29.6" width="5" height="7.8" stroke-width="1.2"/><path d="M114.1,26.4 L114.1,29.6 M114.1,37.4 L114.1,40.4"/>
<rect x="119.2" y="31" width="4.8" height="3.4" stroke-width="1.2"/><path d="M121.6,28.7 L121.6,31 M121.6,34.4 L121.6,36.8"/>
<path d="M138.8,37.2 L137.3,37.2 A2.7,2.7 0 1 1 139.04,32.43 A3.6,3.6 0 1 1 145.79,30.89 A3.2,3.2 0 1 1 147,37.2 L146.4,37.2" stroke-width="1.2"/>
</g>
<path d="M145.8,30.8 L140.1,35.9 L142.7,35.9 L140.5,40.1 L146.5,33.9 L143.9,33.9 L146.6,30.8 Z" fill="#bdbdbd"/>
<g fill="none" stroke="#bdbdbd" stroke-width="1.3" stroke-linecap="round" stroke-linejoin="round">
<path d="M162.2,37.5 L173.4,37.5 M163.7,37.5 L163.7,32.6 C163.7,29.6 165.6,28.2 167.9,28.2 C170.2,28.2 172.1,29.6 172.1,32.6 L172.1,37.5 M167.9,26.9 L167.9,28.2"/><path d="M166.6,39.4 L169.2,39.4"/>
<path d="M643.8,38.6 L652.6,30.2"/>
<rect x="668.4" y="30.6" width="10.2" height="8" stroke-width="1.2"/>
<path d="M997.2,9.6 L1004.8,9.6" stroke-width="1.1"/>
<rect x="1029" y="7.4" width="6.4" height="6.2" stroke-width="1.1"/><path d="M1030.6,7.4 L1030.6,5.9 L1037.2,5.9 L1037.2,12.2 L1035.4,12.2" stroke-width="1"/>
<path d="M1061,6.4 L1068.6,13.8 M1068.6,6.4 L1061,13.8" stroke-width="1.1"/>
</g>
<rect x="693" y="29" width="12.200000000000045" height="1.1" fill="#b4b4b4"/>
<rect x="699" y="31.6" width="6.2000000000000455" height="1.1" fill="#8c8c8c"/>
<rect x="699" y="33.9" width="6.2000000000000455" height="1.1" fill="#b4b4b4"/>
<rect x="693" y="36.1" width="12.200000000000045" height="1.1" fill="#8c8c8c"/>
<rect x="693" y="39" width="12.200000000000045" height="1.1" fill="#b4b4b4"/>
<path d="M697.6,31.4 A2.5,2.5 0 1 0 697.6,36.2" fill="none" stroke="#a8a8a8" stroke-width="1.1"/><circle cx="696.4" cy="34.2" r="0.8" fill="#b0b0b0"/>
<rect x="719.3" y="34.4" width="2" height="2" fill="#bdbdbd"/>
<rect x="724.3" y="34.4" width="2" height="2" fill="#bdbdbd"/>
<rect x="729.2" y="34.4" width="2" height="2" fill="#bdbdbd"/>
<path d="M192.5,29.4 L187.5,29.4 L187.5,33.818 L192.5,33.818 L192.5,38.8 L187.5,38.8 M198.8,33.199999999999996 L194.4,33.199999999999996 L194.4,36.0 L198.8,36.0 L198.8,38.8 L194.4,38.8 M210.5,30.2 L212.7,29.4 L212.7,38.8 M214.4,29.4 L219.4,29.4 L219.4,38.8 L214.4,38.8 Z M225.70000000000002,33.199999999999996 L221.3,33.199999999999996 L221.3,36.0 L225.70000000000002,36.0 L225.70000000000002,38.8 L221.3,38.8 M236.1,30.2 L238.29999999999998,29.4 L238.29999999999998,38.8 M245.0,29.4 L240.0,29.4 L240.0,33.818 L245.0,33.818 L245.0,38.8 L240.0,38.8 M251.3,33.199999999999996 L246.9,33.199999999999996 L246.9,36.0 L251.3,36.0 L251.3,38.8 L246.9,38.8 M260.1,29.4 L265.1,29.4 L265.1,38.8 L260.1,38.8 M261.1,33.818 L265.1,33.818 M267.0,29.4 L272.0,29.4 L272.0,38.8 L267.0,38.8 Z M278.29999999999995,33.199999999999996 L273.9,33.199999999999996 L273.9,36.0 L278.29999999999995,36.0 L278.29999999999995,38.8 L273.9,38.8 M292.40000000000003,30.2 L294.6,29.4 L294.6,38.8 M317.5,29.4 L322.5,29.4 L322.5,38.8 L317.5,38.8 M318.5,33.818 L322.5,33.818 M347.8,29.4 L342.8,29.4 L342.8,33.818 L347.8,33.818 L347.8,38.8 L342.8,38.8 M365.70000000000005,30.2 L367.90000000000003,29.4 L367.90000000000003,38.8 M374.6,29.4 L369.6,29.4 L369.6,33.818 L374.6,33.818 L374.6,38.8 L369.6,38.8 M389.40000000000003,29.4 L394.40000000000003,29.4 L394.40000000000003,38.8 L389.40000000000003,38.8 M390.40000000000003,33.818 L394.40000000000003,33.818 M396.3,29.4 L401.3,29.4 L401.3,38.8 L396.3,38.8 Z M416.3,30.2 L418.5,29.4 L418.5,38.8 M420.2,29.4 L420.2,38.8 M420.2,33.199999999999996 L425.59999999999997,33.199999999999996 L425.59999999999997,38.8 M439.1,29.4 L444.1,29.4 L444.1,33.818 L439.1,33.818 L439.1,38.8 L444.1,38.8 M446.0,29.4 L446.0,38.8 M446.0,33.199999999999996 L451.4,33.199999999999996 L451.4,38.8 M464.8,29.4 L464.8,34.818 L469.8,34.818 M469.3,31.9 L469.3,38.8 M471.7,29.4 L471.7,38.8 M471.7,33.199999999999996 L477.09999999999997,33.199999999999996 L477.09999999999997,38.8" fill="none" stroke="#c0c0c0" stroke-width="1.05"/>
<path d="M1007,533.5 L1007,531.5 C1007,527.6 1009.6,525.2 1013.1,525.2 C1016.6,525.2 1019.2,527.6 1019.2,531.5 L1019.2,533.5" fill="none" stroke="#f07a20" stroke-width="1.4"/>
<rect x="1005.3" y="530.6" width="3.6" height="6.8" rx="1.8" fill="none" stroke="#f07a20" stroke-width="1.3"/><rect x="1017.3" y="530.6" width="3.6" height="6.8" rx="1.8" fill="none" stroke="#f07a20" stroke-width="1.3"/>
<rect x="136" y="541" width="60" height="1.5" fill="#e07a30"/>
<path d="M953,558.6 L957,550.6" stroke="#c02020" stroke-width="1"/>
<rect x="966.5" y="548.5" width="14" height="12.4" fill="#1a8a1a" stroke="#c8d0c8" stroke-width="1"/>
<rect x="967" y="556.5" width="13" height="4" fill="#20f020"/>
<line x1="969" y1="549" x2="969" y2="556.5" stroke="#2cc02c" stroke-width="0.6"/>
<line x1="971" y1="549" x2="971" y2="556.5" stroke="#2cc02c" stroke-width="0.6"/>
<line x1="973" y1="549" x2="973" y2="556.5" stroke="#2cc02c" stroke-width="0.6"/>
<line x1="975" y1="549" x2="975" y2="556.5" stroke="#2cc02c" stroke-width="0.6"/>
<line x1="977" y1="549" x2="977" y2="556.5" stroke="#2cc02c" stroke-width="0.6"/>
<line x1="979" y1="549" x2="979" y2="556.5" stroke="#2cc02c" stroke-width="0.6"/>
<line x1="967" y1="551" x2="980" y2="551" stroke="#2cc02c" stroke-width="0.6"/>
<line x1="967" y1="553" x2="980" y2="553" stroke="#2cc02c" stroke-width="0.6"/>
<line x1="967" y1="555" x2="980" y2="555" stroke="#2cc02c" stroke-width="0.6"/>
<rect x="985.5" y="556.5" width="2.2" height="4.100000000000023" fill="#22c822"/>
<rect x="988.8" y="553.3" width="2.2" height="7.300000000000068" fill="#22c822"/>
<rect x="992.1" y="550.2" width="2.2" height="10.399999999999977" fill="#22c822"/>
<rect x="995.4" y="547.4" width="2.2" height="13.200000000000045" fill="#22c822"/>
<g fill="none" stroke="#a8a8a8" stroke-width="1.2"><rect x="28.6" y="51.8" width="6.4" height="4.6" rx="2.2"/><rect x="35.4" y="51.8" width="6.4" height="4.6" rx="2.2"/></g><path d="M32,54.1 L38.4,54.1" stroke="#a8a8a8" stroke-width="1.2"/>
<path d="M153.5,51.5 L157.0,55.0 L160.5,51.5" fill="none" stroke="#b8b8b8" stroke-width="1.1"/>
<path d="M181.5,67.5 L185.0,71.0 L188.5,67.5" fill="none" stroke="#d4d400" stroke-width="1.1"/>
<path d="M103.5,320.5 L107.0,324.0 L110.5,320.5" fill="none" stroke="#d4d400" stroke-width="1.1"/>
<path d="M141.5,383.5 L145.0,387.0 L148.5,383.5" fill="none" stroke="#d4d400" stroke-width="1.1"/>
<path d="M888.5,504 L888.5,515 Q888.5,517 890.5,517 L920,517 Q922,517 922,515 L922,504" fill="none" stroke="#a01010"/>
<path d="M927,504 L927,515 Q927,517 929,517 L959,517 Q961,517 961,515 L961,504" fill="none" stroke="#a01010"/>
<path d="M966,504 L966,515 Q966,517 968,517 L997.5,517 Q999.5,517 999.5,515 L999.5,504" fill="none" stroke="#a01010"/>
<path d="M1004.6,504 L1004.6,515 Q1004.6,517 1006.6,517 L1037.2,517 Q1039.2,517 1039.2,515 L1039.2,504" fill="none" stroke="#a01010"/>
<rect x="875.5" y="493.3" width="175.2" height="21.3" rx="2" fill="#ffffff"/>
<g transform="rotate(-12 873 502)"><rect x="861.5" y="490.5" width="23" height="22.5" rx="4" fill="#f25a24"/></g>
<path d="M879.5,495.8 C876,494 866.5,495 866.8,499.5 C867,503 877.5,501.5 878,505 C878.3,508.5 869,509 865.5,507.5" fill="none" stroke="#ffffff" stroke-width="3.2" stroke-linecap="round"/>
<g fill="none" stroke="#1a76dc" stroke-width="1.8">
<rect x="893.2" y="500.6" width="9.8" height="5"/><path d="M898.1,497.6 L898.1,509.6"/>
<path d="M954.4,503 C954.4,509.2 963.2,509.2 963.2,503 M958.8,507.6 L958.8,510.2" stroke-width="1.5"/>
</g>
<circle cx="915.4" cy="502.4" r="1.3" fill="none" stroke="#1a76dc" stroke-width="1.2"/><path d="M921.9,504.2 L921.9,505.6 L920.6,508.4" stroke="#1a76dc" stroke-width="2" fill="none"/>
<circle cx="938.7" cy="504.2" r="6.3" fill="#1a76dc"/><rect x="935.4" y="502" width="1.4" height="1.8" fill="#fff"/><rect x="940.6" y="502" width="1.4" height="1.8" fill="#fff"/><path d="M935.4,505.4 L942,505.4 Q941.6,508.2 938.7,508.2 Q935.8,508.2 935.4,505.4 Z" fill="#fff"/>
<rect x="956" y="497.4" width="5.6" height="9" rx="2.8" fill="#1a76dc"/>
<rect x="973.6" y="499.6" width="11.6" height="8.8" rx="1.2" fill="none" stroke="#1a76dc" stroke-width="1.6"/>
<rect x="975.4" y="501.4" width="1.5" height="1.4" fill="#1a76dc"/>
<rect x="977.9" y="501.4" width="1.5" height="1.4" fill="#1a76dc"/>
<rect x="980.4" y="501.4" width="1.5" height="1.4" fill="#1a76dc"/>
<rect x="982.9" y="501.4" width="1.5" height="1.4" fill="#1a76dc"/>
<rect x="975.4" y="503.59999999999997" width="1.5" height="1.4" fill="#1a76dc"/>
<rect x="977.9" y="503.59999999999997" width="1.5" height="1.4" fill="#1a76dc"/>
<rect x="980.4" y="503.59999999999997" width="1.5" height="1.4" fill="#1a76dc"/>
<rect x="982.9" y="503.59999999999997" width="1.5" height="1.4" fill="#1a76dc"/>
<rect x="976" y="505.8" width="7" height="1.3" fill="#1a76dc"/>
<circle cx="999.1" cy="500" r="3" fill="#1a76dc"/><path d="M994.4,509.8 L994.4,506.4 Q994.4,504.2 997,504.2 L1001,504.2 L1001,509.8 Z" fill="#1a76dc"/><rect x="998.4" y="504" width="9" height="5.8" fill="#1a76dc"/><rect x="1000.6" y="505.3" width="2.2" height="3.2" fill="#fff"/><rect x="1003.8" y="505.3" width="2.2" height="3.2" fill="#fff"/>
<path d="M1017.2,498.2 L1013.9,499.8 L1014.6,502.8 L1016.4,502.6 L1016.4,509.5 L1023.2,509.5 L1023.2,502.6 L1025,502.8 L1025.6,499.8 L1022.4,498.2 Q1019.8,500 1017.2,498.2 Z" fill="#1a76dc"/>
<rect x="1034.8" y="499.4" width="5.2" height="5.1" rx="1.6" fill="#1a76dc"/>
<rect x="1040.6" y="499.4" width="5.2" height="5.1" rx="1.6" fill="#1a76dc"/>
<rect x="1034.8" y="504.4" width="5.2" height="5.1" rx="1.6" fill="#1a76dc"/>
<rect x="1040.6" y="504.4" width="5.2" height="5.1" rx="1.6" fill="#1a76dc"/>
<rect x="421" y="570" width="30" height="4" rx="2" fill="#f4f8f6"/>
</svg>

<!-- title bar text -->
<div class="a tt" style="left:12px;top:4px">wh6</div>
<div class="a tt" style="left:39px;top:4px">-</div>
<div class="a tt" style="left:50px;top:4px">Ver6.8.651</div>
<div class="a tt" style="left:120px;top:4.5px;font-size:10px">文华云节点-电信3</div>
<div class="a tt" style="left:223px;top:4.5px;font-size:10px">系统K线图</div>

<!-- toolbar text -->
<div class="a tb" style="left:490px;top:28.5px;font-size:11.5px">日</div>
<div class="a tb" style="left:515px;top:28.5px;font-size:11.5px">周</div>
<div class="a tb" style="left:541px;top:28.5px;font-size:11.5px">月</div>
<div class="a tb" style="left:566px;top:28.5px;font-size:11.5px">季</div>
<div class="a tb" style="left:591px;top:28.5px;font-size:11.5px">年</div>
<div class="a tb" style="left:617px;top:28.5px;font-size:11.5px">自</div>
<div class="a tb" style="left:830px;top:28px">发现</div>
<div class="a tb" style="left:860px;top:28px">板块</div>
<div class="a tb" style="left:890px;top:28px">账户</div>
<div class="a tb" style="left:921px;top:28px">资讯</div>
<div class="a tb" style="left:951px;top:28px">个性化</div>
<div class="a tb" style="left:992px;top:28px">系统工具</div>
<div class="a tb" style="left:1043px;top:28px">帮助</div>

<!-- chart header -->
<div class="a" style="left:47px;top:49px;font-size:10px;color:#b8b8b8;font-family:'Liberation Serif',serif">沪金</div>
<div class="a" style="left:71.5px;top:49px;font-size:10px;color:#b8b8b8;font-family:'Liberation Serif',serif">au2412C584</div>
<div class="a" style="left:133px;top:49px;font-size:10px;color:#b8b8b8">日线</div>

<!-- MA labels -->
<div class="a" style="left:72px;top:65px;font-size:10.2px;color:#d4d400">MA组合(5,10,20,50,0,0)</div>
<div class="a" style="left:195px;top:65px;font-size:10.2px;color:#d0d0d0">MA5 13.34</div>
<div class="a" style="left:251px;top:65px;font-size:10.2px;color:#d4d400">MA10 12.91</div>
<div class="a" style="left:311px;top:65px;font-size:10.2px;color:#e000e0">MA20 12.78</div>
<div class="a" style="left:372px;top:65px;font-size:10.2px;color:#00d000">MA50 13.13</div>

<!-- chart price labels -->
<div class="a" style="left:815px;top:79px;font-size:10.3px;color:#e83c3c">56.52</div>
<div class="a" style="left:332px;top:244.5px;font-size:10.3px;color:#e83c3c">19.12</div>
<div class="a" style="left:131px;top:304px;font-size:10.3px;color:#00e0e0">8.72</div>
<div class="a" style="left:446px;top:299.5px;font-size:10.3px;color:#00e0e0">9.86</div>
<div class="a" style="left:68px;top:303.5px;font-size:10.2px;color:#d4d400">68天</div>
<div class="a" style="left:847px;top:269px;width:26px;height:13px;border:1px solid #c8c8c8;background:#000;font-size:10.3px;color:#f0f0f0;text-align:center;line-height:13px">12.78</div>

<!-- volume labels -->
<div class="a" style="left:72px;top:317px;font-size:10.2px;color:#d4d400">CJL(0)</div>
<div class="a" style="left:118px;top:317px;font-size:10.2px;color:#d0d0d0">69.00(52:48)</div>
<div class="a" style="left:184px;top:317px;font-size:10.2px;color:#d0d0d0">OPID 222.00</div>
<div class="a" style="left:30px;top:326px;font-size:10px;color:#a8a8a8;width:35px;text-align:right">520.00</div>
<div class="a" style="left:30px;top:350px;font-size:10px;color:#a8a8a8;width:35px;text-align:right">260.00</div>

<!-- MACD labels -->
<div class="a" style="left:72px;top:379.5px;font-size:9.9px;color:#d4d400">MACD(12,26,9)</div>
<div class="a" style="left:157px;top:379.5px;font-size:10.2px;color:#d0d0d0">DIFF -0.14</div>
<div class="a" style="left:212px;top:379.5px;font-size:10.2px;color:#d4d400">DEA -0.27</div>
<div class="a" style="left:267px;top:379.5px;font-size:10.2px;color:#d0d0d0">0.27</div>
<div class="a" style="left:30px;top:428px;font-size:10px;color:#a8a8a8;width:35px;text-align:right">5.00</div>
<div class="a" style="left:30px;top:483px;font-size:10px;color:#a8a8a8;width:35px;text-align:right">0.00</div>

<!-- date axis -->
<div class="a" style="left:154px;top:507px;font-size:10.5px;color:#a0a0a0">2024/08/01</div>
<div class="a" style="left:298px;top:507px;font-size:10.5px;color:#f0f0f0">2024/08/15 <span style="color:#b0b0b0">星期四</span></div>
<div class="a" style="left:401px;top:507px;font-size:10.5px;color:#a0a0a0">2024/09/02</div>
<div class="a" style="left:615px;top:507px;font-size:10.5px;color:#a0a0a0">2024/10/08</div>

<!-- left tabs -->
<div class="a lt" style="left:2px;top:88px">分<br>时<br>图</div>
<div class="a lt" style="left:2px;top:177px;color:#e0e0e0">K<br>线<br>图</div>
<div class="a lt" style="left:2px;top:267px">释<br>义<br>图</div>
<div class="a lt" style="left:2px;top:338px">隐<br>含<br>波<br>动<br>率<br>1</div>
<div class="a lt" style="left:2px;top:428px">隐<br>含<br>波<br>动<br>率<br>2</div>

<!-- data window -->
<div class="a" style="left:25.5px;top:67px;font-size:7.6px;color:#c8c8c8;letter-spacing:-0.1px">20240815</div>
<div class="a dw" style="left:26px;top:77.3px">开盘</div>
<div class="a dw g" style="left:26px;top:90.3px">14.00</div>
<div class="a dw" style="left:26px;top:103.3px">最高</div>
<div class="a dw g" style="left:26px;top:116.3px">14.06</div>
<div class="a dw" style="left:26px;top:129.3px">最低</div>
<div class="a dw g" style="left:26px;top:142.3px">11.98</div>
<div class="a dw" style="left:26px;top:155.3px">收盘</div>
<div class="a dw g" style="left:26px;top:168.3px">13.14</div>
<div class="a dw g" style="left:26px;top:182.3px">-1.22</div>
<div class="a dw g" style="left:26px;top:196.3px">-8.50%</div>
<div class="a dw" style="left:26px;top:208.3px">成交量</div>
<div class="a dw y" style="left:26px;top:222.3px">69</div>
<div class="a dw g" style="left:26px;top:236.3px">-16</div>
<div class="a dw" style="left:26px;top:248.3px">持仓量</div>
<div class="a dw y" style="left:26px;top:262.3px">222</div>
<div class="a dw g" style="left:26px;top:276.3px">-10</div>
<div class="a dw" style="left:26px;top:289.3px">结算</div>
<div class="a dw y" style="left:26px;top:301.3px">15.32</div>

<!-- right panel -->
<div class="a" style="left:880px;top:52px;font-size:18.8px;color:#e6e600">au2412C584</div>
<div class="a" style="left:877px;top:76.8px;font-size:12px;color:#d8d8d8;">卖五</div>
<div class="a" style="left:937px;top:77.8px;font-size:11px;color:#d8d8d8;font-weight:bold;"><span style="letter-spacing:0.8px">----</span></div>
<div class="a" style="left:991px;top:77.8px;font-size:11px;color:#e6e600;font-weight:bold;"><span style="letter-spacing:0.8px">----</span></div>
<div class="a" style="left:877px;top:94.0px;font-size:12px;color:#d8d8d8;">卖四</div>
<div class="a" style="left:937px;top:95.0px;font-size:11px;color:#d8d8d8;font-weight:bold;"><span style="letter-spacing:0.8px">----</span></div>
<div class="a" style="left:991px;top:95.0px;font-size:11px;color:#e6e600;font-weight:bold;"><span style="letter-spacing:0.8px">----</span></div>
<div class="a" style="left:877px;top:111.5px;font-size:12px;color:#d8d8d8;">卖三</div>
<div class="a" style="left:937px;top:112.5px;font-size:11px;color:#d8d8d8;font-weight:bold;"><span style="letter-spacing:0.8px">----</span></div>
<div class="a" style="left:991px;top:112.5px;font-size:11px;color:#e6e600;font-weight:bold;"><span style="letter-spacing:0.8px">----</span></div>
<div class="a" style="left:877px;top:129.0px;font-size:12px;color:#d8d8d8;">卖二</div>
<div class="a" style="left:937px;top:130.0px;font-size:11px;color:#d8d8d8;font-weight:bold;"><span style="letter-spacing:0.8px">----</span></div>
<div class="a" style="left:991px;top:130.0px;font-size:11px;color:#e6e600;font-weight:bold;"><span style="letter-spacing:0.8px">----</span></div>
<div class="a" style="left:877px;top:146.5px;font-size:12px;color:#d8d8d8;">卖一</div>
<div class="a" style="left:937px;top:147.5px;font-size:11px;color:#d8d8d8;font-weight:bold;"><span style="letter-spacing:0.8px">----</span></div>
<div class="a" style="left:991px;top:147.5px;font-size:11px;color:#e6e600;font-weight:bold;"><span style="letter-spacing:0.8px">----</span></div>
<div class="a" style="left:877px;top:163.5px;font-size:12px;color:#d8d8d8;">买一</div>
<div class="a" style="left:937px;top:164.5px;font-size:11px;color:#d8d8d8;font-weight:bold;"><span style="letter-spacing:0.8px">----</span></div>
<div class="a" style="left:991px;top:164.5px;font-size:11px;color:#e6e600;font-weight:bold;"><span style="letter-spacing:0.8px">----</span></div>
<div class="a" style="left:877px;top:181.0px;font-size:12px;color:#d8d8d8;">买二</div>
<div class="a" style="left:937px;top:182.0px;font-size:11px;color:#d8d8d8;font-weight:bold;"><span style="letter-spacing:0.8px">----</span></div>
<div class="a" style="left:991px;top:182.0px;font-size:11px;color:#e6e600;font-weight:bold;"><span style="letter-spacing:0.8px">----</span></div>
<div class="a" style="left:877px;top:199.0px;font-size:12px;color:#d8d8d8;">买三</div>
<div class="a" style="left:937px;top:200.0px;font-size:11px;color:#d8d8d8;font-weight:bold;"><span style="letter-spacing:0.8px">----</span></div>
<div class="a" style="left:991px;top:200.0px;font-size:11px;color:#e6e600;font-weight:bold;"><span style="letter-spacing:0.8px">----</span></div>
<div class="a" style="left:877px;top:216.0px;font-size:12px;color:#d8d8d8;">买四</div>
<div class="a" style="left:937px;top:217.0px;font-size:11px;color:#d8d8d8;font-weight:bold;"><span style="letter-spacing:0.8px">----</span></div>
<div class="a" style="left:991px;top:217.0px;font-size:11px;color:#e6e600;font-weight:bold;"><span style="letter-spacing:0.8px">----</span></div>
<div class="a" style="left:877px;top:233.5px;font-size:12px;color:#d8d8d8;">买五</div>
<div class="a" style="left:937px;top:234.5px;font-size:11px;color:#d8d8d8;font-weight:bold;"><span style="letter-spacing:0.8px">----</span></div>
<div class="a" style="left:991px;top:234.5px;font-size:11px;color:#e6e600;font-weight:bold;"><span style="letter-spacing:0.8px">----</span></div>
<div class="a" style="left:877px;top:252.5px;font-size:12px;color:#d8d8d8;">总卖</div>
<div class="a" style="left:937px;top:253.5px;font-size:11px;color:#d8d8d8;font-weight:bold;"><span style="letter-spacing:0.8px">----</span></div>
<div class="a" style="left:991px;top:253.5px;font-size:11px;color:#e6e600;font-weight:bold;"><span style="letter-spacing:0.8px">----</span></div>
<div class="a" style="left:877px;top:269.1px;font-size:12px;color:#d8d8d8;">总买</div>
<div class="a" style="left:937px;top:270.1px;font-size:11px;color:#d8d8d8;font-weight:bold;"><span style="letter-spacing:0.8px">----</span></div>
<div class="a" style="left:991px;top:270.1px;font-size:11px;color:#e6e600;font-weight:bold;"><span style="letter-spacing:0.8px">----</span></div>
<div class="a" style="left:877px;top:289.1px;font-size:12px;color:#d8d8d8;">最新</div>
<div class="a" style="left:902px;width:60px;text-align:right;top:289.1px;font-size:12px;color:#e0e0e0;font-weight:bold;">0.00</div>
<div class="a" style="left:973px;top:289.1px;font-size:12px;color:#d8d8d8;">涨跌</div>
<div class="a" style="left:993px;width:80px;text-align:right;top:289.1px;font-size:12px;color:#e0e0e0;font-weight:bold;">0.00/0.00%</div>
<div class="a" style="left:877px;top:307.65000000000003px;font-size:12px;color:#d8d8d8;">现手</div>
<div class="a" style="left:902px;width:60px;text-align:right;top:307.65000000000003px;font-size:12px;color:#e6e600;font-weight:bold;">-----</div>
<div class="a" style="left:973px;top:307.65000000000003px;font-size:12px;color:#d8d8d8;">速涨</div>
<div class="a" style="left:993px;width:80px;text-align:right;top:307.65000000000003px;font-size:12px;color:#e0e0e0;font-weight:bold;">0.00%</div>
<div class="a" style="left:877px;top:326.20000000000005px;font-size:12px;color:#d8d8d8;">总量</div>
<div class="a" style="left:902px;width:60px;text-align:right;top:326.20000000000005px;font-size:12px;color:#e6e600;font-weight:bold;">0</div>
<div class="a" style="left:973px;top:326.20000000000005px;font-size:12px;color:#d8d8d8;">开盘</div>
<div class="a" style="left:993px;width:80px;text-align:right;top:326.20000000000005px;font-size:12px;color:#e0e0e0;font-weight:bold;">0.00</div>
<div class="a" style="left:877px;top:344.75px;font-size:12px;color:#d8d8d8;">持仓</div>
<div class="a" style="left:902px;width:60px;text-align:right;top:344.75px;font-size:12px;color:#e6e600;font-weight:bold;">477</div>
<div class="a" style="left:973px;top:344.75px;font-size:12px;color:#d8d8d8;">最高</div>
<div class="a" style="left:993px;width:80px;text-align:right;top:344.75px;font-size:12px;color:#e0e0e0;font-weight:bold;">0.00</div>
<div class="a" style="left:877px;top:363.3px;font-size:12px;color:#d8d8d8;">日增</div>
<div class="a" style="left:902px;width:60px;text-align:right;top:363.3px;font-size:12px;color:#e6e600;font-weight:bold;">477</div>
<div class="a" style="left:973px;top:363.3px;font-size:12px;color:#d8d8d8;">最低</div>
<div class="a" style="left:993px;width:80px;text-align:right;top:363.3px;font-size:12px;color:#e0e0e0;font-weight:bold;">0.00</div>
<div class="a" style="left:877px;top:381.85px;font-size:12px;color:#d8d8d8;">外盘</div>
<div class="a" style="left:902px;width:60px;text-align:right;top:381.85px;font-size:12px;color:#e6e600;font-weight:bold;">-----</div>
<div class="a" style="left:973px;top:381.85px;font-size:12px;color:#d8d8d8;">均价</div>
<div class="a" style="left:993px;width:80px;text-align:right;top:381.85px;font-size:12px;color:#e0e0e0;font-weight:bold;">0.00</div>
<div class="a" style="left:877px;top:400.40000000000003px;font-size:12px;color:#d8d8d8;">比例</div>
<div class="a" style="left:902px;width:60px;text-align:right;top:400.40000000000003px;font-size:12px;color:#e6e600;font-weight:bold;">-----</div>
<div class="a" style="left:973px;top:400.40000000000003px;font-size:12px;color:#d8d8d8;">昨收</div>
<div class="a" style="left:993px;width:80px;text-align:right;top:400.40000000000003px;font-size:12px;color:#e0e0e0;font-weight:bold;">56.52</div>
<div class="a" style="left:877px;top:418.95000000000005px;font-size:12px;color:#d8d8d8;">内盘</div>
<div class="a" style="left:902px;width:60px;text-align:right;top:418.95000000000005px;font-size:12px;color:#e6e600;font-weight:bold;">-----</div>
<div class="a" style="left:973px;top:418.95000000000005px;font-size:12px;color:#d8d8d8;">昨结</div>
<div class="a" style="left:993px;width:80px;text-align:right;top:418.95000000000005px;font-size:12px;color:#e0e0e0;font-weight:bold;">52.84</div>
<div class="a" style="left:877px;top:437.5px;font-size:12px;color:#d8d8d8;">比例</div>
<div class="a" style="left:902px;width:60px;text-align:right;top:437.5px;font-size:12px;color:#e6e600;font-weight:bold;">-----</div>
<div class="a" style="left:973px;top:437.5px;font-size:12px;color:#d8d8d8;">涨停</div>
<div class="a" style="left:993px;width:80px;text-align:right;top:437.5px;font-size:12px;color:#e83c3c;font-weight:bold;">-----</div>
<div class="a" style="left:877px;top:456.05000000000007px;font-size:12px;color:#d8d8d8;">杠杆</div>
<div class="a" style="left:902px;width:60px;text-align:right;top:456.05000000000007px;font-size:12px;color:#e6e600;font-weight:bold;">12.02</div>
<div class="a" style="left:973px;top:456.05000000000007px;font-size:12px;color:#d8d8d8;">跌停</div>
<div class="a" style="left:993px;width:80px;text-align:right;top:456.05000000000007px;font-size:12px;color:#00d000;font-weight:bold;">-----</div>

<!-- bottom tabs -->
<div class="a bt" style="left:29px;top:526px">收藏品种</div>
<div class="a bt" style="left:80px;top:526px">中金所期权</div>
<div class="a bt" style="left:141px;top:526px;color:#f08a3c">上期所期权</div>
<div class="a bt" style="left:201px;top:526px">大商所期权</div>
<div class="a bt" style="left:261px;top:526px">郑商所期权</div>
<div class="a bt" style="left:322px;top:526px">上期能源期权</div>
<div class="a bt" style="left:394px;top:526px">广期所期权</div>
<div class="a bt" style="left:455px;top:526px">上交所期权</div>
<div class="a bt" style="left:515px;top:526px">深交所期权</div>
<div class="a bt" style="left:576px;top:526px">期权VIX指数</div>
<div class="a bt" style="left:643px;top:526px">标的排名</div>
<div class="a" style="left:1026px;top:526.5px;font-size:10.6px;color:#f08a3c">在线客服</div>

<!-- status bar -->
<div class="a" style="left:29px;top:549px;font-size:10px;color:#3cc83c">上证指数</div>
<div class="a" style="left:74.5px;top:549px;font-size:10.5px;font-weight:normal;-webkit-text-stroke:0.25px currentColor;font-family:'Liberation Mono',monospace;transform:scaleX(0.88);transform-origin:0 0;color:#3cc83c">3266.24</div>
<div class="a" style="left:118.3px;top:549px;font-size:10.5px;font-weight:normal;-webkit-text-stroke:0.25px currentColor;font-family:'Liberation Mono',monospace;transform:scaleX(0.88);transform-origin:0 0;color:#3cc83c">-20.17</div>
<div class="a" style="left:175px;top:549px;font-size:10px;color:#e83c3c">文华商品</div>
<div class="a" style="left:220.7px;top:549px;font-size:10.5px;font-weight:normal;-webkit-text-stroke:0.25px currentColor;font-family:'Liberation Mono',monospace;transform:scaleX(0.88);transform-origin:0 0;color:#e83c3c">174.28</div>
<div class="a" style="left:259.3px;top:549px;font-size:10.5px;font-weight:normal;-webkit-text-stroke:0.25px currentColor;font-family:'Liberation Mono',monospace;transform:scaleX(0.88);transform-origin:0 0;color:#e83c3c">+0.42</div>
<div class="a" style="left:857px;top:547px;width:43px;height:15px;background:#2e3034;border:1px solid #3a3c40;box-sizing:border-box;font-size:10px;color:#c8c8c8;text-align:center;line-height:14px">期货户</div>
<div class="a" style="left:903px;top:547px;width:43px;height:15px;background:#2e3034;border:1px solid #3a3c40;box-sizing:border-box;font-size:10px;color:#c8c8c8;text-align:center;line-height:14px">外盘户</div>
<div class="a" style="left:1003px;top:549px;font-size:10.75px;color:#d0d0d0">20:31:17 - wh</div>

</body></html>
